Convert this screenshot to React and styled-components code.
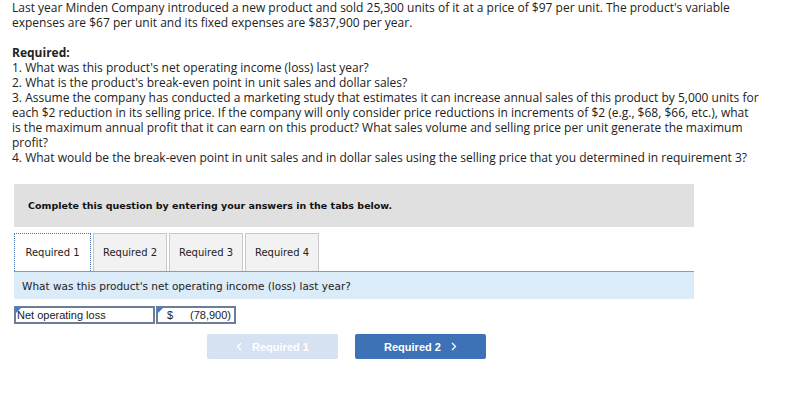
import React from "react";
import styled, { createGlobalStyle } from "styled-components";

const Global = createGlobalStyle`
  body {
    margin: 0;
    background: #fff;
  }
`;

const Page = styled.div`
  width: 806px;
  height: 402px;
  overflow: hidden;
  box-sizing: border-box;
  padding: 0 0 0 12px;
`;

const Para = styled.div`
  font-family: "Open Sans", "Liberation Sans", sans-serif;
  font-size: 12px;
  line-height: 15px;
  color: #222;
  width: ${({ w }) => w}px;
  margin-bottom: ${({ gap }) => gap || 0}px;
`;

const Bold = styled.div`
  font-weight: 700;
`;

const Panel = styled.div`
  margin: 19px 0 0 2px;
  width: 680px;
`;

const Banner = styled.div`
  background: #e0e0e0;
  height: 43px;
  display: flex;
  align-items: center;
  padding-left: 14px;
  font-family: "DejaVu Sans", Verdana, sans-serif;
  font-size: 9.5px;
  font-weight: 700;
  color: #111;
`;

const TabRow = styled.div`
  display: flex;
  gap: 2px;
  margin-top: 6px;
`;

const Tab = styled.div`
  width: ${({ active }) => (active ? 77 : 74)}px;
  height: 38px;
  box-sizing: border-box;
  display: flex;
  align-items: center;
  justify-content: center;
  font-family: "DejaVu Sans", Verdana, sans-serif;
  font-size: 10px;
  color: #222;
  background: ${({ active }) => (active ? "#fff" : "#f2f2f2")};
  border: ${({ active }) => (active ? "1px dotted #4a6fa5" : "1px solid #c8c8c8")};
  border-bottom: none;
`;

const Question = styled.div`
  background: #dcebf8;
  border-top: 1px solid #999;
  height: 27px;
  display: flex;
  align-items: center;
  padding-left: 8px;
  font-family: "DejaVu Sans", Verdana, sans-serif;
  font-size: 10.5px;
  color: #222;
`;

const AnswerRow = styled.div`
  display: flex;
  margin-top: 7px;
  height: 18px;
`;

const Cell = styled.div`
  position: relative;
  box-sizing: border-box;
  width: ${({ w }) => w}px;
  border: 2px solid #6b7d98;
  display: flex;
  align-items: center;
  justify-content: space-between;
  padding: 0 3px 0 ${({ pl }) => pl || 1}px;
  font-family: "Liberation Sans", Arial, sans-serif;
  font-size: 11px;
  color: #222;
  background: #fff;
  & + & {
    margin-left: 1px;
  }
`;

const Corner = styled.span`
  position: absolute;
  top: 0;
  left: 0;
  width: 0;
  height: 0;
  border-top: 5px solid #3a7bd5;
  border-right: 5px solid transparent;
`;

const Nav = styled.div`
  display: flex;
  gap: 17px;
  margin: 10px 0 0 193px;
`;

const NavButton = styled.div`
  width: 131px;
  height: 25px;
  border-radius: 2px;
  display: flex;
  align-items: center;
  justify-content: center;
  gap: 10px;
  font-family: "Liberation Sans", Arial, sans-serif;
  font-size: 11px;
  font-weight: 700;
  color: #fff;
  background: ${({ disabled }) => (disabled ? "#d6e2f1" : "#3d73b6")};
`;

const Chevron = ({ dir }) => (
  <svg width="6" height="9" viewBox="0 0 6 9">
    <path
      d={dir === "left" ? "M5 1 L1.5 4.5 L5 8" : "M1 1 L4.5 4.5 L1 8"}
      fill="none"
      stroke="#fff"
      strokeWidth="1.3"
    />
  </svg>
);

const App = () => {
  const tabs = ["Required 1", "Required 2", "Required 3", "Required 4"];
  return (
    <Page>
      <Global />
      <Para w={735} gap={15}>
        Last year Minden Company introduced a new product and sold 25,300 units of it at a price of $97 per
        unit. The product's variable expenses are $67 per unit and its fixed expenses are $837,900 per year.
      </Para>
      <Para w={748}>
        <Bold>Required:</Bold>
        <div>1. What was this product's net operating income (loss) last year?</div>
        <div>2. What is the product's break-even point in unit sales and dollar sales?</div>
        <div>
          3. Assume the company has conducted a marketing study that estimates it can increase annual sales of
          this product by 5,000 units for each $2 reduction in its selling price. If the company will only
          consider price reductions in increments of $2 (e.g., $68, $66, etc.), what is the maximum annual
          profit that it can earn on this product? What sales volume and selling price per unit generate the
          maximum profit?
        </div>
        <div>
          4. What would be the break-even point in unit sales and in dollar sales using the selling price that
          you determined in requirement 3?
        </div>
      </Para>
      <Panel>
        <Banner>Complete this question by entering your answers in the tabs below.</Banner>
        <TabRow>
          {tabs.map((t, i) => (
            <Tab key={t} active={i === 0}>
              {t}
            </Tab>
          ))}
        </TabRow>
        <Question>What was this product's net operating income (loss) last year?</Question>
        <AnswerRow>
          <Cell w={141}>
            <Corner />
            <span>Net operating loss</span>
          </Cell>
          <Cell w={80} pl={9}>
            <Corner />
            <span>$</span>
            <span>(78,900)</span>
          </Cell>
        </AnswerRow>
        <Nav>
          <NavButton disabled>
            <Chevron dir="left" />
            <span>Required 1</span>
          </NavButton>
          <NavButton>
            <span>Required 2</span>
            <Chevron dir="right" />
          </NavButton>
        </Nav>
      </Panel>
    </Page>
  );
};

export default App;
